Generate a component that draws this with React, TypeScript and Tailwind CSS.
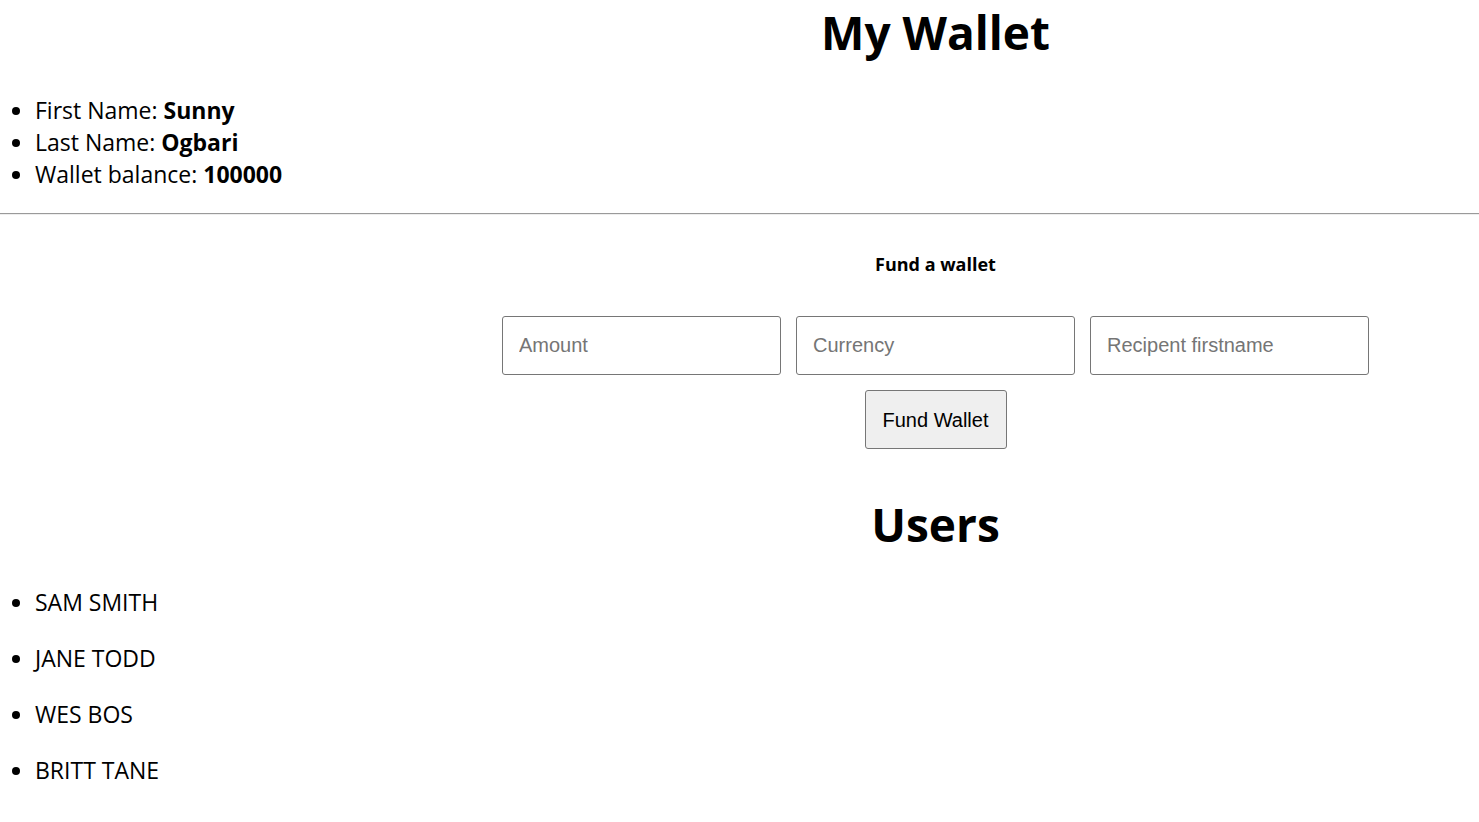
const profile = [
  { label: "First Name", value: "Sunny" },
  { label: "Last Name", value: "Ogbari" },
  { label: "Wallet balance", value: "100000" },
]

const users = ["SAM SMITH", "JANE TODD", "WES BOS", "BRITT TANE"]

export default function App() {
  return (
    <div className="min-h-screen bg-white text-black font-['Open_Sans',sans-serif]">
      {/* header */}
      <div className="pl-[392px] text-center pt-[2px]">
        <h1 className="text-[46px] font-bold leading-[60px]">My Wallet</h1>
      </div>

      <ul className="list-disc pl-[35px] mt-[32px] text-[23px] leading-[32px]">
        {profile.map((p) => (
          <li key={p.label}>
            {p.label}: <b>{p.value}</b>
          </li>
        ))}
      </ul>

      <hr className="mt-[23px] h-0 border-t border-b border-t-[#9a9a9a] border-b-[#eeeeee]" />

      {/* fund form */}
      <div className="pl-[392px] text-center">
        <h4 className="mt-[37px] text-[18px] font-bold leading-[24px]">Fund a wallet</h4>

        <form className="mt-[40px] flex flex-col items-center gap-[15px] font-['Liberation_Sans',Arial,sans-serif]">
          <div className="flex gap-[15px]">
            <input
              placeholder="Amount"
              className="w-[279px] h-[59px] px-4 text-[20px] border border-[#767676] rounded-[3px] placeholder:text-[#757575]"
            />
            <input
              placeholder="Currency"
              className="w-[279px] h-[59px] px-4 text-[20px] border border-[#767676] rounded-[3px] placeholder:text-[#757575]"
            />
            <input
              placeholder="Recipent firstname"
              className="w-[279px] h-[59px] px-4 text-[20px] border border-[#767676] rounded-[3px] placeholder:text-[#757575]"
            />
          </div>
          <button
            type="button"
            className="w-[142px] h-[59px] text-[20px] bg-[#efefef] border border-[#767676] rounded-[3px]"
          >
            Fund Wallet
          </button>
        </form>

        <h1 className="mt-[43px] text-[46px] font-bold leading-[64px]">Users</h1>
      </div>

      <ul className="list-disc pl-[35px] mt-[30px] flex flex-col gap-[24px] text-[23px] leading-[32px]">
        {users.map((u) => (
          <li key={u}>{u}</li>
        ))}
      </ul>
    </div>
  )
}
